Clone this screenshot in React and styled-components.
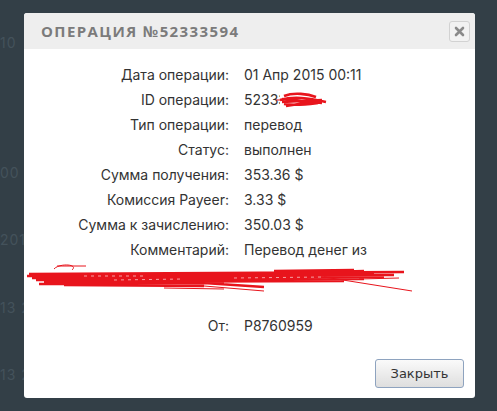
import React from 'react'
import styled, { createGlobalStyle } from 'styled-components'

const GlobalStyle = createGlobalStyle`
  html, body {
    margin: 0;
    padding: 0;
    background: #333f47;
  }
`

const Page = styled.div`
  position: relative;
  width: 497px;
  height: 411px;
  background: #333f47;
  overflow: hidden;
  font-family: Inter, sans-serif;
`

const Backdrop = styled.div`
  display: flex;
  flex-direction: column;
  padding-top: 34px;
`

const GhostText = styled.span`
  font-size: 14px;
  line-height: 18px;
  color: #44525b;
  margin-top: ${props => props.top || 0}px;
  letter-spacing: 1px;
`

const Modal = styled.div`
  position: absolute;
  left: 24px;
  top: 13px;
  width: 451px;
  height: 385px;
  background: #fff;
  border-radius: 3px;
  display: flex;
  flex-direction: column;
  overflow: hidden;
`

const Header = styled.div`
  height: 36px;
  background: #eeeeee;
  display: flex;
  align-items: center;
  justify-content: space-between;
  padding: 0 5px 0 17px;
`

const Title = styled.h3`
  margin: 0;
  font-family: "Open Sans", sans-serif;
  font-size: 15px;
  font-weight: 700;
  color: #7b7b7b;
  letter-spacing: 1.4px;
`

const CloseButton = styled.button`
  width: 21px;
  height: 21px;
  margin-top: 1px;
  padding: 0;
  border: 1px solid #d2d2d2;
  border-radius: 3px;
  background: #f2f2f2;
  display: flex;
  align-items: center;
  justify-content: center;
`

const Body = styled.div`
  position: relative;
  flex: 1;
  padding: 13px 0 0;
`

const Grid = styled.div`
  display: grid;
  grid-template-columns: 205px 1fr;
  column-gap: 15px;
  font-size: 14px;
  line-height: 25px;
  color: #333;
`

const Label = styled.div`
  text-align: right;
`

const Value = styled.div``

const Spacer = styled.div`
  grid-column: 1 / 3;
  height: ${props => props.h}px;
`

const Footer = styled.div`
  display: flex;
  justify-content: flex-end;
  padding: 0 11px 10px;
`

const Button = styled.button`
  width: 89px;
  height: 29px;
  border: 1px solid #8ea3bf;
  border-radius: 3px;
  background: linear-gradient(#fafafa, #dedede);
  font-family: "DejaVu Sans", sans-serif;
  font-size: 13px;
  color: #333;
  padding: 0;
`

const Scribble = styled.svg`
  position: absolute;
  pointer-events: none;
`

const rows = [
  ['Дата операции:', '01 Апр 2015 00:11'],
  ['ID операции:', '52333594'],
  ['Тип операции:', 'перевод'],
  ['Статус:', 'выполнен'],
  ['Сумма получения:', '353.36 $'],
  ['Комиссия Payeer:', '3.33 $'],
  ['Сумма к зачислению:', '350.03 $'],
  ['Комментарий:', 'Перевод денег из'],
]

function CloseIcon() {
  return (
    <svg width="11" height="11" viewBox="0 0 11 11">
      <path d="M2 2 L9 9 M9 2 L2 9" stroke="#8a8a8a" strokeWidth="2.6" strokeLinecap="round" />
    </svg>
  )
}

export default function App() {
  return (
    <Page>
      <GlobalStyle />
      <Backdrop>
        <GhostText>10</GhostText>
        <GhostText top={112}>00</GhostText>
        <GhostText top={49}>201</GhostText>
        <GhostText top={50}>13 2</GhostText>
        <GhostText top={49}>13 2</GhostText>
      </Backdrop>
      <Modal>
        <Header>
          <Title>ОПЕРАЦИЯ №52333594</Title>
          <CloseButton><CloseIcon /></CloseButton>
        </Header>
        <Body>
          <Scribble style={{ left: 252, top: 42, width: 52, height: 18 }} viewBox="0 0 52 18">
            <rect x="4" y="1" width="48" height="17" fill="#fff" />
            <path d="M8 5 C18 1 32 3 40 6 M4 9 C18 5 32 7 50 11 M6 11 L46 9 M8 13 C20 15 34 13 42 12 M6 8 L46 12 M10 15 L42 10 M12 10 L44 10"
              stroke="#e8141c" strokeWidth="2.6" fill="none" />
            <path d="M0 9 L20 9" stroke="#e8141c" strokeWidth="1" fill="none" />
          </Scribble>
          <Scribble style={{ left: 0, top: 212, width: 400, height: 34 }} viewBox="0 0 400 34">
            <path d="M33 5 L62 5 M30 8 C35 2 55 3 48 9"
              stroke="#e8141c" strokeWidth="1" fill="none" />
            <path d="M5 13 L380 11 M3 15 L370 14 M8 17 L360 16 M12 19 L340 18 M20 21 L320 20 M15 23 L200 22 M60 14 L350 13 M40 24 L180 25 M150 20 L240 26 M200 14 L340 10 M250 10 L330 9 M270 12 L310 13 M10 16 L300 17 M30 20 L260 19 M200 18 L345 15"
              stroke="#e8141c" strokeWidth="2.4" fill="none" />
            <path d="M140 27 L200 28 M180 25 L240 30 M240 19 L300 14 M300 16 L388 30 M330 13 L360 14 M335 18 L375 17"
              stroke="#e8141c" strokeWidth="1" fill="none" />
            <path d="M60 15 L120 15 M210 17 L300 16 M90 19 L160 18" stroke="#ffffff" strokeWidth="0.6" strokeDasharray="3 4" fill="none" />
          </Scribble>
          <Grid>
            {rows.map(([label, value]) => (
              <React.Fragment key={label}>
                <Label>{label}</Label>
                <Value>{value}</Value>
              </React.Fragment>
            ))}
            <Spacer h={25} />
            <Spacer h={26} />
            <Label>От:</Label>
            <Value>P8760959</Value>
          </Grid>
        </Body>
        <Footer>
          <Button>Закрыть</Button>
        </Footer>
      </Modal>
    </Page>
  )
}
